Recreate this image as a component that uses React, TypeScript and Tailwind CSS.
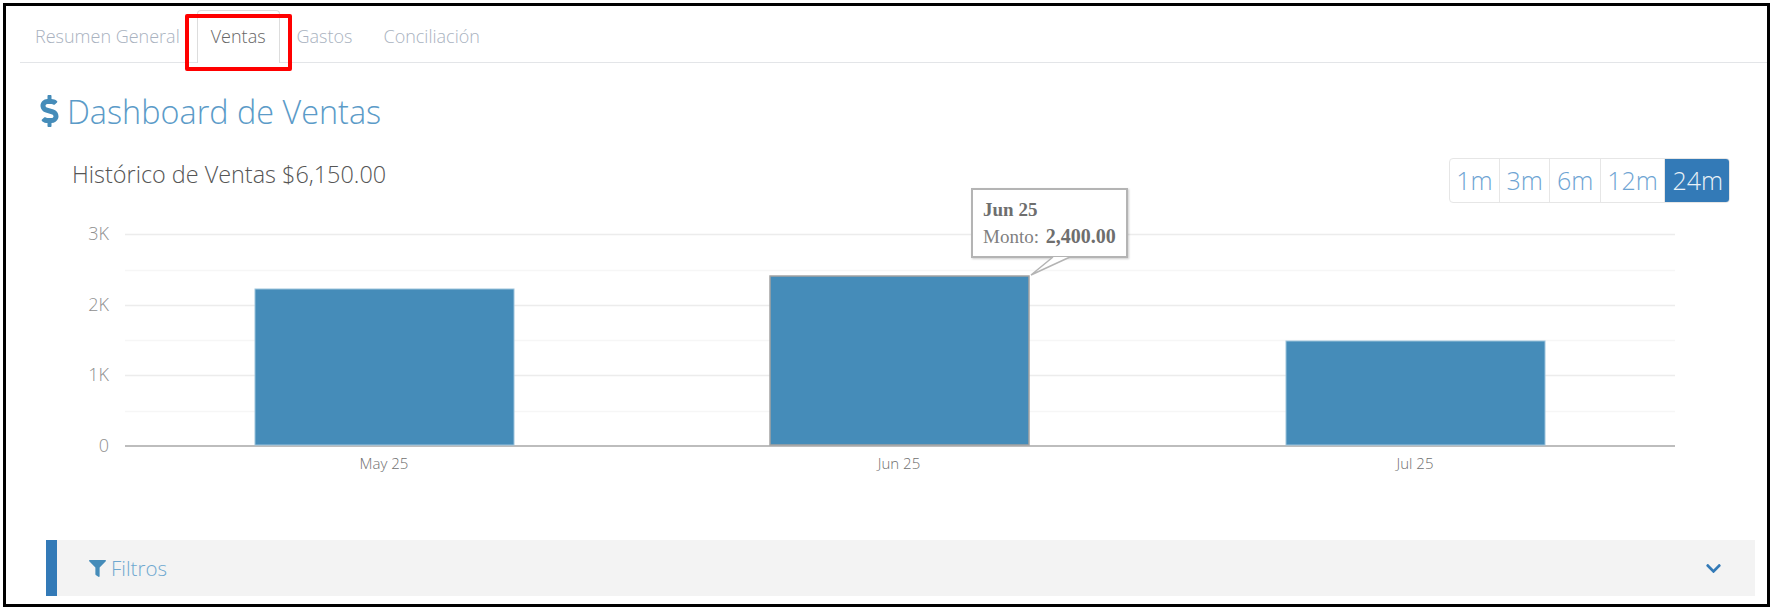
import { FaChevronDown, FaDollarSign, FaFilter } from "react-icons/fa";

const X0 = 46;
const Y0 = 205;
const grid = [234, 270, 305, 340, 375, 411];
const yLabels = [
  { t: "3K", y: 234 },
  { t: "2K", y: 305 },
  { t: "1K", y: 375 },
  { t: "0", y: 446 },
];
const bars = [
  { x: 255, w: 259, top: 289, label: "May 25", cx: 384, hover: false },
  { x: 770, w: 259, top: 276, label: "Jun 25", cx: 899, hover: true },
  { x: 1286, w: 259, top: 341, label: "Jul 25", cx: 1415, hover: false },
];
const ranges = ["1m", "3m", "6m", "12m", "24m"];
const tabs = ["Resumen General", "Ventas", "Gastos", "Conciliación"];

function Chart() {
  return (
    <svg width="1709" height="300" className="block" style={{ fontFamily: '"Open Sans", sans-serif' }}>
      <g transform={`translate(${-X0} ${-Y0})`}>
        {grid.map((y, i) => (
          <line key={y} x1="125" x2="1675" y1={y + 0.5} y2={y + 0.5} stroke={i % 2 === 0 ? "#ececec" : "#f6f6f6"} strokeWidth="1.5" />
        ))}
        <line x1="125" x2="1675" y1="446" y2="446" stroke="#bdbdbd" strokeWidth="2" />
        {yLabels.map((l) => (
          <text key={l.t} x="109" y={l.y + 6} textAnchor="end" fontSize="18" fontWeight="300" fill="#8f8f8f">
            {l.t}
          </text>
        ))}
        {bars.map((b) => (
          <g key={b.label}>
            <rect
              x={b.x}
              y={b.top}
              width={b.w}
              height={445 - b.top}
              fill="#458cb9"
              stroke={b.hover ? "#a3a3a3" : "#9cc3dc"}
              strokeWidth={b.hover ? 1.5 : 1}
            />
            <text x={b.cx} y="469" textAnchor="middle" fontSize="15" fontWeight="300" fill="#6f6f6f">
              {b.label}
            </text>
          </g>
        ))}
      </g>
    </svg>
  );
}

export default function App() {
  return (
    <div className="h-[610px] w-[1773px] bg-white p-[3px] font-['Open_Sans',sans-serif] font-light">
      <div className="relative h-full border-[3px] border-black pl-[14px]">
        <nav className="flex h-[57px] gap-[3px] border-b border-[#e3e5e8] pl-px pt-[4px] text-[18px] leading-[24px]">
          {tabs.map((t) => (
            <div
              key={t}
              className={
                t === "Ventas"
                  ? "h-[53px] rounded-t border border-b-0 border-[#dddddd] bg-white px-[13px] pt-[13px] text-[#666666]"
                  : "h-[52px] border border-transparent px-[13px] pt-[13px] text-[#a9b2c0]"
              }
            >
              {t}
            </div>
          ))}
        </nav>

        {/* annotation drawn over the screenshot */}
        <div className="absolute left-[179px] top-[8px] h-[57px] w-[107px] rounded-[2px] border-4 border-[#ff0000]" />

        <h1 className="ml-[20px] mt-[24px] flex h-[48px] items-center gap-[8px] text-[32.4px] font-light leading-[48px] text-[#5b9bc8]">
          <FaDollarSign className="h-[32px] w-[19px] shrink-0 text-[#458cb9]" />
          Dashboard de Ventas
        </h1>

        <div className="pl-[26px] pr-[12px]">
          <div className="mt-[23px] flex items-start justify-between pl-[26px] pr-[25px]">
            <h2 className="pt-[1px] text-[23.4px] font-light leading-[30px] text-[#555555]">Histórico de Ventas $6,150.00</h2>
            <div className="flex h-[45px] overflow-hidden rounded border border-[#e6e6e6] text-[25px] leading-[43px]">
              {ranges.map((r) => (
                <div
                  key={r}
                  className={
                    r === "24m"
                      ? "-my-px -mr-px bg-[#337ab7] px-[7px] leading-[45px] text-[#eaf2f8]"
                      : "border-r border-[#e6e6e6] px-[6.5px] text-[#6ea4d3] last:border-r-0"
                  }
                >
                  {r}
                </div>
              ))}
            </div>
          </div>

          <div className="relative mt-[2px]">
            <Chart />
            <div className="absolute left-[925px] top-[-17px] h-[70px] w-[157px] border-2 border-[#b4b4b4] bg-white pl-[10px] pt-[7px] font-['Liberation_Serif',serif] text-[19px] font-normal leading-[26px] text-[#808080] shadow-[1px_1px_2px_rgba(0,0,0,0.2)]">
              <div className="font-bold text-[#6e6e6e]">Jun 25</div>
              <div className="whitespace-nowrap">
                Monto: <span className="ml-[2px] text-[20px] font-bold text-[#6e6e6e]">2,400.00</span>
              </div>
              <svg width="42" height="20" className="absolute left-[57px] top-[66px] overflow-visible">
                <polygon points="23,1 40,1 1,19" fill="#ffffff" />
                <polyline points="23,1 1,19 40,1" fill="none" stroke="#b4b4b4" strokeWidth="1.5" />
              </svg>
            </div>
          </div>

          <div className="mt-[35px] flex h-[56px] items-center border-l-[11px] border-[#337ab7] bg-[#f3f3f3] pl-[32px] pr-[33px] text-[20.5px] text-[#6ea8d0]">
            <FaFilter className="mr-[5px] h-[17px] w-[17px] text-[#458cb9]" />
            <span>Filtros</span>
            <FaChevronDown className="ml-auto h-[17px] w-[17px] text-[#337ab7]" />
          </div>
        </div>
      </div>
    </div>
  );
}
